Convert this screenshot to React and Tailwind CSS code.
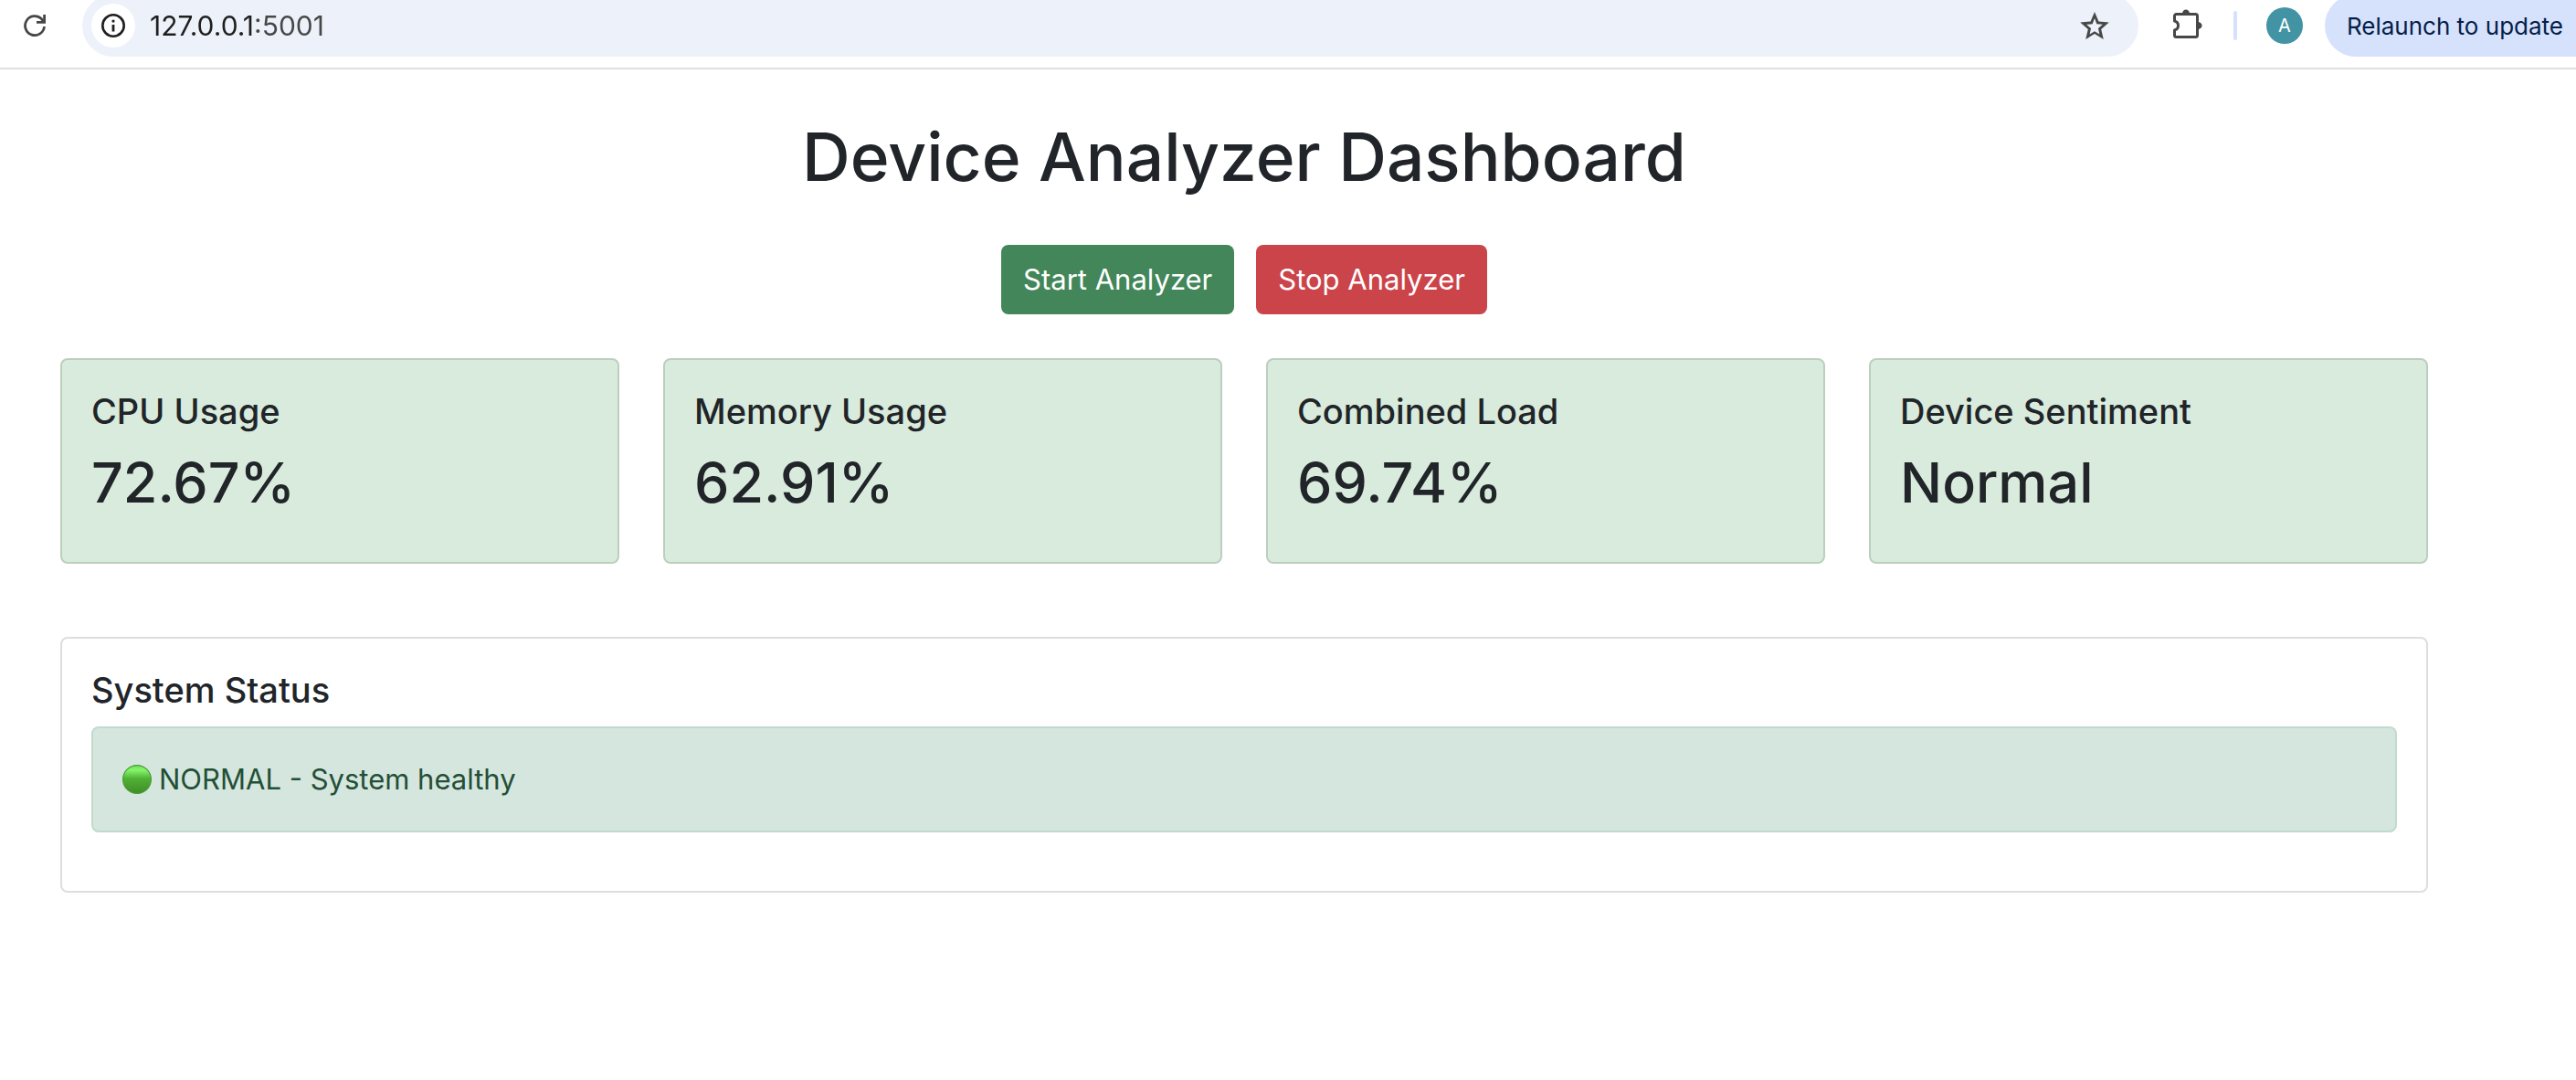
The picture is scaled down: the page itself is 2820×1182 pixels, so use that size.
const metrics = [
  { label: "CPU Usage", value: "72.67%" },
  { label: "Memory Usage", value: "62.91%" },
  { label: "Combined Load", value: "69.74%" },
  { label: "Device Sentiment", value: "Normal" },
];

function ReloadIcon() {
  return (
    <svg className="size-6" viewBox="0 0 24 24" fill="none" stroke="currentColor" strokeWidth="2.8" aria-hidden="true">
      <path d="M22.5 13A10.5 10.5 0 1 1 19.4 4.6L22 8" />
      <path d="M22.6 0V9.6M14 8.3H24" />
    </svg>
  );
}

function InfoIcon() {
  return (
    <svg className="size-[26px]" viewBox="0 0 26 26" fill="none" stroke="currentColor" aria-hidden="true">
      <circle cx="13" cy="13" r="11.7" strokeWidth="2.6" />
      <path d="M13 12v7.5M13 6.7v2.8" strokeWidth="2.8" />
    </svg>
  );
}

function StarIcon() {
  return (
    <svg className="h-[30px] w-8" viewBox="2 2 20 19" fill="currentColor" aria-hidden="true">
      <path d="M12 6.5l1.5 3.9 4.1.35-3.1 2.7.93 4L12 15.4l-3.43 2.05.93-4-3.1-2.7 4.1-.35L12 6.5M12 2L9.19 8.63 2 9.24l5.46 4.73L5.82 21 12 17.27 18.18 21l-1.64-7.03L22 9.24l-7.19-.61L12 2z" />
    </svg>
  );
}

function ExtensionsIcon() {
  return (
    <svg className="h-9 w-8" viewBox="0 0 32 36" aria-hidden="true">
      <path
        d="M1.5 13V7.5a2 2 0 0 1 2-2H24.5a2 2 0 0 1 2 2V28.5a2 2 0 0 1-2 2H3.5a2 2 0 0 1-2-2V23c5.4-1.4 5.4-8.6 0-10Z"
        fill="none"
        stroke="currentColor"
        strokeWidth="3"
        strokeLinejoin="round"
      />
      <path d="M10 5a4 4.6 0 0 1 8 0ZM27 14a4.6 4 0 0 1 0 8Z" fill="currentColor" />
    </svg>
  );
}

function GreenDot() {
  return (
    <svg className="size-8" viewBox="0 0 32 32" aria-hidden="true">
      <defs>
        <linearGradient id="dot" x1="0" y1="0" x2="0" y2="1">
          <stop offset="0" stopColor="#6fd95a" />
          <stop offset="0.16" stopColor="#85f76c" />
          <stop offset="0.48" stopColor="#50b035" />
          <stop offset="1" stopColor="#3f8e27" />
        </linearGradient>
      </defs>
      <circle cx="16" cy="16" r="15.4" fill="url(#dot)" stroke="#4a9c35" strokeWidth="1.2" />
    </svg>
  );
}

function BrowserBar() {
  return (
    <header className="overflow-hidden border-b-2 border-[#e0e0e0] pb-3 text-[#474747]">
      <div className="-mt-1.5 flex h-[68px] items-center">
        <button type="button" aria-label="Reload" className="mr-10 ml-[26px]">
          <ReloadIcon />
        </button>
        <div className="flex h-full flex-1 items-center rounded-full bg-[#edf1f9] pr-8 pl-2.5">
          <button
            type="button"
            aria-label="Site information"
            className="flex size-12 items-center justify-center rounded-full bg-white text-[#1f1f1f]"
          >
            <InfoIcon />
          </button>
          <input
            type="text"
            aria-label="Address"
            defaultValue="127.0.0.1:5001"
            className="ml-4 h-10 flex-1 bg-[linear-gradient(to_right,#1f1f1f_114px,#474747_114px)] bg-clip-text text-[30px] text-transparent outline-none"
          />
          <button type="button" aria-label="Bookmark this page">
            <StarIcon />
          </button>
        </div>
        <button type="button" aria-label="Extensions" className="ml-[38px]">
          <ExtensionsIcon />
        </button>
        <div className="mr-8 ml-[34px] h-8 w-1 rounded-full bg-[#d6e1fb]" />
        <button
          type="button"
          aria-label="Profile"
          className="flex size-10 items-center justify-center rounded-full bg-[#4294a5] text-[20px] text-white"
        >
          A
        </button>
        <button
          type="button"
          className="ml-6 h-full rounded-l-full bg-[#d6e1fb] pr-3.5 pl-6 text-[26px] whitespace-nowrap text-[#041e49]"
        >
          Relaunch to update
        </button>
      </div>
    </header>
  );
}

export default function App() {
  return (
    <div className="bg-white font-['Inter',sans-serif] text-[#212529]">
      <BrowserBar />
      <main className="mr-24 pt-12 pb-12">
        <div className="mx-auto max-w-[2640px] px-6">
          <h1 className="mb-12 text-center text-[73px] leading-[96px] font-medium">Device Analyzer Dashboard</h1>
          <div className="mb-12 flex justify-center gap-6">
            <button type="button" className="rounded-lg bg-[#428659] px-6 py-3.5 text-[31px] leading-[48px] text-white">
              Start Analyzer
            </button>
            <button type="button" className="rounded-lg bg-[#cb444a] px-6 py-3.5 text-[31px] leading-[48px] text-white">
              Stop Analyzer
            </button>
          </div>
          <div className="grid grid-cols-4 gap-12">
            {metrics.map((m) => (
              <section key={m.label} className="rounded-lg border-2 border-[#bccfbf] bg-[#d9ebdc] px-8 pt-8 pb-12">
                <h2 className="mb-4 text-[38px] leading-[48px] font-medium">{m.label}</h2>
                <p className="text-[61px] leading-[77px] font-medium">{m.value}</p>
              </section>
            ))}
          </div>
          <section className="mt-20 rounded-lg border-2 border-[#dedede] px-8 pt-8 pb-16">
            <h2 className="mb-4 text-[38px] leading-[48px] font-medium">System Status</h2>
            <div
              role="status"
              className="flex items-center gap-2 rounded-lg border-2 border-[#c1dace] bg-[#d5e6de] p-8 text-[31px] leading-[48px] text-[#234f36]"
            >
              <GreenDot />
              <span>NORMAL - System healthy</span>
            </div>
          </section>
        </div>
      </main>
    </div>
  );
}
